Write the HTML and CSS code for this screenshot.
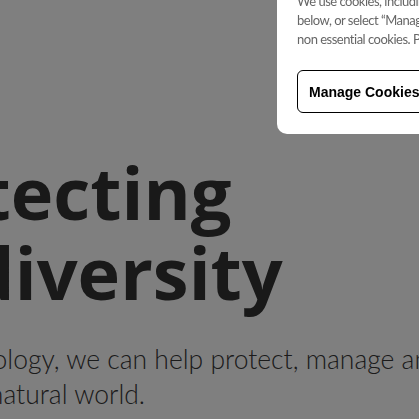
FILE: index.html
```html
<!DOCTYPE html>
<html lang="en">
<head>
<meta charset="utf-8">
<title>Protecting biodiversity</title>
<link rel="stylesheet" href="styles.css">
</head>
<body>
<main class="page">
  <section class="hero">
    <h1 class="hero-title">Protecting<br>biodiversity</h1>
    <p class="hero-text">Using technology, we can help protect, manage and<br>restore the natural world.</p>
  </section>
</main>
<div class="overlay"></div>
<aside class="cookie-panel">
  <p class="cookie-text">
    <span class="cookie-line">We use cookies, including third party cookies, described</span>
    <span class="cookie-line">below, or select “Manage cookies” to choose which ones to use or reject all</span>
    <span class="cookie-line">non essential cookies. Please see our Cookie Policy.</span>
  </p>
  <div class="cookie-actions">
    <button class="cookie-btn">Manage Cookies</button>
  </div>
</aside>
</body>
</html>
```
FILE: styles.css
```css
html, body {
  margin: 0;
  padding: 0;
}
body {
  background: #fff;
  color: #333;
  font-family: "Open Sans", sans-serif;
  overflow: hidden;
  width: 419px;
  height: 419px;
}
.page {
  padding-top: 152px;
}
.hero {
  margin-left: -143px;
  width: 800px;
}
.hero-title {
  margin: 0;
  font-size: 72px;
  line-height: 80px;
  font-weight: 700;
  color: #333;
}
.hero-text {
  margin: 30px 0 0;
  font-family: Lato, sans-serif;
  font-weight: 300;
  font-size: 26.5px;
  line-height: 35px;
  color: #363636;
  white-space: nowrap;
}
.overlay {
  position: fixed;
  inset: 0;
  background: rgba(0, 0, 0, 0.5);
}
.cookie-panel {
  position: fixed;
  top: -8px;
  left: 277px;
  width: 400px;
  height: 142px;
  background: #fff;
  border-radius: 0 0 0 10px;
  box-sizing: border-box;
  padding: 0 20px;
}
.cookie-text {
  margin: 0;
  font-family: Lato, sans-serif;
  font-size: 13px;
  letter-spacing: -0.5px;
  line-height: 19px;
  color: #666;
}
.cookie-line {
  display: block;
  white-space: nowrap;
}
.cookie-actions {
  margin-top: 21px;
}
.cookie-btn {
  height: 43px;
  padding: 0 11px;
  background: #fff;
  border: 1px solid #000;
  border-radius: 6px;
  font-family: "Liberation Sans", Arial, sans-serif;
  font-weight: 700;
  font-size: 14px;
  color: #000;
  white-space: nowrap;
}
```
